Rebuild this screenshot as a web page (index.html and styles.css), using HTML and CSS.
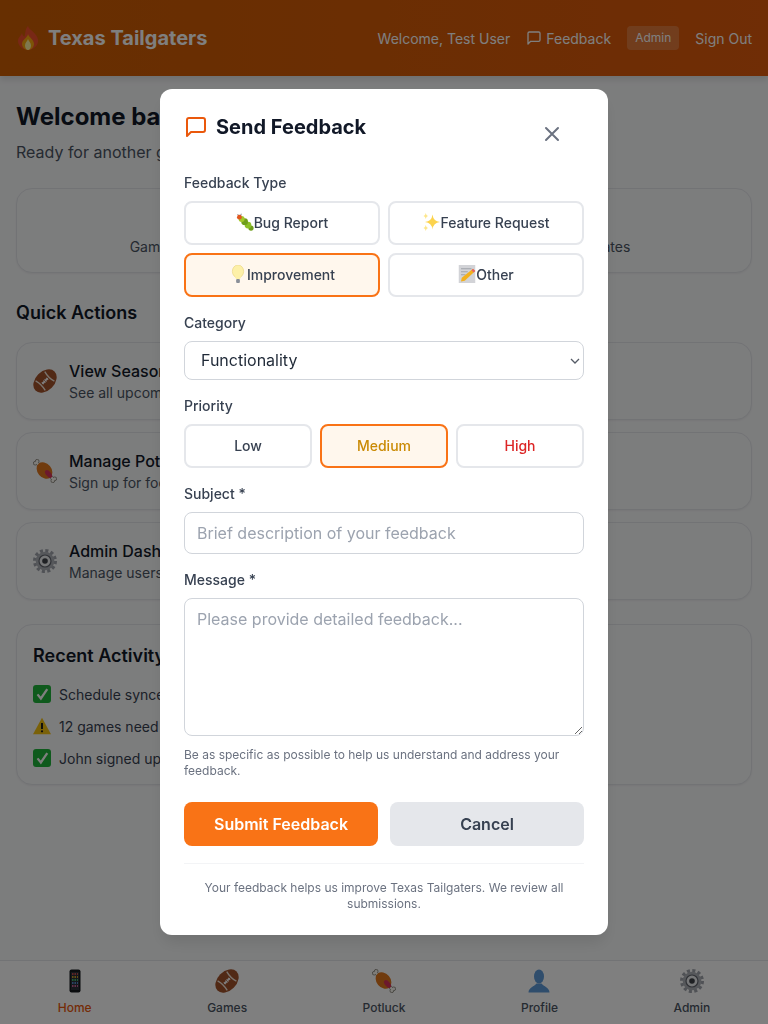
FILE: index.html
```html
<!DOCTYPE html>
<html lang="en">

<head>
    <meta charset="UTF-8">
    <title>Texas Tailgaters</title>
    <link rel="stylesheet" href="styles.css">
</head>

<body>
    <!-- emoji drawings, reused with <use> -->
    <svg class="sprite">
        <symbol id="flame" viewBox="0 0 24 24">
            <path fill="#f0502c" d="M12 0c1 4 9 7 10 13.500 1 6-5 10.500-10 10.500S1.500 20 2 14c.5-3 3-4 4-7 .5 2 1.500 3.500 2.500 3.500 1-3 .5-7.500 3.500-10.500z"/>
            <path fill="#f9a80f" d="M12 8c.5 3 6 5.500 6 10 0 3-3 6-6 6s-6-3-6-6c0-4.500 5.500-6 6-10z"/>
            <path fill="#fff0a0" d="M12 13c.5 2 3 3.500 3 6.500 0 2.500-1.500 4.500-3 4.500s-3-2-3-4.500c0-3 2.500-4.500 3-6.500z"/>
        </symbol>
        <symbol id="football" viewBox="0 0 24 24">
            <g transform="rotate(-45 12 12)">
                <ellipse cx="12" cy="12" rx="13.500" ry="9.500" fill="#a3522a"/>
                <path d="M5.500 5.200Q7.500 12 5.500 18.800M18.500 5.200Q16.500 12 18.500 18.800" fill="none" stroke="#f3e6da" stroke-width="1.400"/>
                <path d="M8 12h8M9 10.500v3M11 10.500v3M13 10.500v3M15 10.500v3" fill="none" stroke="#fff" stroke-width="1.100"/>
            </g>
        </symbol>
        <symbol id="meat" viewBox="0 0 24 24">
            <g fill="#8f8b82" stroke="#8f8b82">
                <path d="M3 3l18 18" stroke-width="3.800"/>
                <circle cx="2.200" cy="4.200" r="1.800"/>
                <circle cx="4.200" cy="2.200" r="1.800"/>
                <circle cx="21.800" cy="19.800" r="1.800"/>
                <circle cx="19.800" cy="21.800" r="1.800"/>
            </g>
            <g fill="#fffdf6" stroke="#fffdf6">
                <path d="M3 3l18 18" stroke-width="2.400"/>
                <circle cx="2.200" cy="4.200" r="1"/>
                <circle cx="4.200" cy="2.200" r="1"/>
                <circle cx="21.800" cy="19.800" r="1"/>
                <circle cx="19.800" cy="21.800" r="1"/>
            </g>
            <ellipse cx="11.500" cy="11.500" rx="7" ry="9" transform="rotate(-40 11.500 11.500)" fill="#e0761c"/>
            <ellipse cx="15.500" cy="15" rx="2.500" ry="4.500" transform="rotate(-40 15.500 15)" fill="#d8325a"/>
        </symbol>
        <symbol id="gear" viewBox="0 0 24 24">
            <circle cx="12" cy="12" r="10.200" fill="none" stroke="#a0a4ac" stroke-width="3.600" stroke-dasharray="3 2.340"/>
            <circle cx="12" cy="12" r="9.300" fill="#adb0b7"/>
            <circle cx="12" cy="12" r="6" fill="#eceef0" stroke="#63676f" stroke-width="1.200"/>
            <circle cx="12" cy="12" r="2.800" fill="#3f4248"/>
        </symbol>
        <symbol id="phone" viewBox="0 0 24 24">
            <rect x="6.500" y="0.500" width="11" height="23" rx="2" fill="#15181c"/>
            <rect x="8" y="3" width="8" height="18" fill="#2d3138"/>
            <path d="M9 5h1.500M11.500 5H13M14 5h1" stroke="#ef5350" stroke-width="1.300"/>
            <path d="M9 8h1.500M11.500 8H13M14 8h1" stroke="#fbbf24" stroke-width="1.300"/>
            <path d="M9 11h1.500M11.500 11H13M14 11h1" stroke="#4ade80" stroke-width="1.300"/>
            <path d="M9 14h1.500M11.500 14H13M14 14h1" stroke="#60a5fa" stroke-width="1.300"/>
            <path d="M9 17h1.500M11.500 17H13M14 17h1" stroke="#f472b6" stroke-width="1.300"/>
        </symbol>
        <symbol id="person" viewBox="0 0 24 24">
            <ellipse cx="12" cy="7.500" rx="5" ry="7" fill="#5f9ad8"/>
            <path fill="#5f9ad8" d="M1.500 23.500c0-5 6-6 8-9h5c2 3 8 4 8 9z"/>
        </symbol>
        <symbol id="bug" viewBox="0 0 24 24">
            <path d="M2 2l3 2M7 1l-1 3" stroke="#555" stroke-width="1"/>
            <circle cx="20" cy="20" r="3.500" fill="#6f9e1c"/>
            <circle cx="16" cy="16" r="4.500" fill="#8cbf26"/>
            <circle cx="11.500" cy="11.500" r="4.500" fill="#6f9e1c"/>
            <circle cx="7.500" cy="8" r="4" fill="#a3c72a"/>
            <circle cx="4.500" cy="5.500" r="3.200" fill="#e2571e"/>
        </symbol>
        <symbol id="sparkles" viewBox="0 0 24 24">
            <path fill="#fcd34d" d="M14 2q1 9 10 10-9 1-10 10-1-9-10-10 9-1 10-10z"/>
            <path fill="#fde68a" d="M5 0q.5 3.500 3 4-2.500.5-3 4-.5-3.500-3-4 2.500-.5 3-4zM5 16q.5 3.500 3 4-2.500.5-3 4-.5-3.500-3-4 2.500-.5 3-4z"/>
        </symbol>
        <symbol id="bulb" viewBox="0 0 24 24">
            <ellipse cx="12" cy="8.500" rx="7.500" ry="8.500" fill="#fdf0a8" stroke="#ecd98a" stroke-width="1"/>
            <path fill="#fdf0a8" d="M8 15h8l-1.500 4h-5z"/>
            <rect x="9.500" y="18.500" width="5" height="5.500" rx="1.500" fill="#8a8f98"/>
        </symbol>
        <symbol id="note" viewBox="0 0 24 24">
            <rect x="1" y="0" width="22" height="24" fill="#d2d3d7"/>
            <path d="M4 5h14M4 9h9M4 13h6" stroke="#9a9da4" stroke-width="1.200"/>
            <path d="M20 5l3 3L9 21l-5 1 1-5z" fill="#f2b01e"/>
            <path d="M20 5l3 3-2 2-3-3z" fill="#e4606d"/>
        </symbol>
        <symbol id="check" viewBox="0 0 24 24">
            <rect x="0" y="0" width="24" height="24" rx="4" fill="#1fb53a"/>
            <path d="M6 12.500l4.500 5.500L19 5.500" fill="none" stroke="#fff" stroke-width="3"/>
        </symbol>
        <symbol id="warning" viewBox="0 0 24 24">
            <path d="M12 1L24 23H0z" fill="#f5c211"/>
            <path d="M12 8v8" stroke="#1c1c1c" stroke-width="2.600"/>
            <circle cx="12" cy="19" r="1.500" fill="#1c1c1c"/>
        </symbol>
    </svg>

    <header class="topbar">
        <div class="brand"><svg class="emoji-24"><use href="#flame"/></svg><span>Texas Tailgaters</span></div>
        <nav class="topnav">
            <span>Welcome, Test User</span>
            <a class="topnav-feedback">
                <svg class="icon-16" viewBox="0 0 24 24" fill="none" stroke="currentColor" stroke-width="2" stroke-linecap="round" stroke-linejoin="round"><path d="M21 15a2 2 0 0 1-2 2H7l-4 4V5a2 2 0 0 1 2-2h14a2 2 0 0 1 2 2z"/></svg>
                Feedback
            </a>
            <a class="admin-pill">Admin</a>
            <a>Sign Out</a>
        </nav>
    </header>

    <main class="page">
        <h1>Welcome back, Test User!</h1>
        <p class="lead">Ready for another great game day?</p>

        <section class="card stats">
            <div class="stat"><b>12</b><span>Games Remaining</span></div>
            <div class="stat"><b>3</b><span>Potluck Items</span></div>
            <div class="stat"><b>5</b><span>Pending Updates</span></div>
        </section>

        <h2>Quick Actions</h2>
        <div class="actions">
            <div class="card action"><svg class="emoji-24"><use href="#football"/></svg><div><h3>View Season Schedule</h3><p>See all upcoming games</p></div></div>
            <div class="card action"><svg class="emoji-24"><use href="#meat"/></svg><div><h3>Manage Potluck</h3><p>Sign up for food and drinks</p></div></div>
            <div class="card action"><svg class="emoji-24"><use href="#gear"/></svg><div><h3>Admin Dashboard</h3><p>Manage users and games</p></div></div>
        </div>

        <section class="card activity">
            <h2>Recent Activity</h2>
            <div class="activity-row"><svg class="emoji-18"><use href="#check"/></svg>Schedule synced with ESPN</div>
            <div class="activity-row"><svg class="emoji-18"><use href="#warning"/></svg>12 games need theme assignment</div>
            <div class="activity-row"><svg class="emoji-18"><use href="#check"/></svg>John signed up for brisket</div>
        </section>
    </main>

    <nav class="tabbar">
        <a class="tab tab-active"><svg class="emoji-24"><use href="#phone"/></svg>Home</a>
        <a class="tab"><svg class="emoji-24"><use href="#football"/></svg>Games</a>
        <a class="tab"><svg class="emoji-24"><use href="#meat"/></svg>Potluck</a>
        <a class="tab"><svg class="emoji-24"><use href="#person"/></svg>Profile</a>
        <a class="tab"><svg class="emoji-24"><use href="#gear"/></svg>Admin</a>
    </nav>

    <div class="overlay">
        <form class="modal">
            <div class="modal-head">
                <h2 class="modal-title">
                    <svg class="icon-24" viewBox="0 0 24 24" fill="none" stroke="#ea580c" stroke-width="2" stroke-linecap="round" stroke-linejoin="round"><path d="M21 15a2 2 0 0 1-2 2H7l-4 4V5a2 2 0 0 1 2-2h14a2 2 0 0 1 2 2z"/></svg>
                    Send Feedback
                </h2>
                <button type="button" class="close">
                    <svg class="icon-24" viewBox="0 0 24 24" fill="none" stroke="currentColor" stroke-width="2" stroke-linecap="round" stroke-linejoin="round"><path d="M6 18 18 6M6 6l12 12"/></svg>
                </button>
            </div>

            <label class="field-label">Feedback Type</label>
            <div class="type-grid">
                <button type="button" class="choice"><svg class="emoji-18"><use href="#bug"/></svg>Bug Report</button>
                <button type="button" class="choice"><svg class="emoji-18"><use href="#sparkles"/></svg>Feature Request</button>
                <button type="button" class="choice selected"><svg class="emoji-18"><use href="#bulb"/></svg>Improvement</button>
                <button type="button" class="choice"><svg class="emoji-18"><use href="#note"/></svg>Other</button>
            </div>

            <label class="field-label">Category</label>
            <select class="select">
                <option>Functionality</option>
            </select>

            <label class="field-label">Priority</label>
            <div class="priority-grid">
                <button type="button" class="choice">Low</button>
                <button type="button" class="choice selected medium">Medium</button>
                <button type="button" class="choice high">High</button>
            </div>

            <label class="field-label">Subject *</label>
            <input class="text-input" type="text" placeholder="Brief description of your feedback">

            <label class="field-label">Message *</label>
            <textarea class="text-input message" placeholder="Please provide detailed feedback..."></textarea>
            <p class="hint">Be as specific as possible to help us understand and address your feedback.</p>

            <div class="modal-buttons">
                <button type="button" class="btn btn-primary">Submit Feedback</button>
                <button type="button" class="btn btn-muted">Cancel</button>
            </div>

            <p class="modal-foot">Your feedback helps us improve Texas Tailgaters. We review all submissions.</p>
        </form>
    </div>
</body>

</html>
```

FILE: styles.css
```css
* {
    box-sizing: border-box;
    margin: 0;
    padding: 0;
}

body {
    font-family: Inter, "Noto Sans", sans-serif;
    background-color: #f9fafb;
    color: #111827;
    height: 1024px;
    overflow: hidden;
    display: flex;
    flex-direction: column;
}

.sprite {
    display: none;
}

.emoji-24 {
    width: 24px;
    height: 24px;
    flex-shrink: 0;
}

.emoji-18 {
    width: 18px;
    height: 18px;
    flex-shrink: 0;
}

.topbar {
    flex-shrink: 0;
    height: 76px;
    padding: 0 16px;
    display: flex;
    justify-content: space-between;
    align-items: center;
    background: linear-gradient(to right, #ce5e02, #e05a0c);
    color: #fff;
    box-shadow: 0 4px 6px rgba(0, 0, 0, 0.1);
}

.brand {
    display: flex;
    align-items: center;
    gap: 8px;
    font-size: 20px;
    font-weight: 700;
}

.topnav {
    display: flex;
    align-items: center;
    gap: 16px;
    font-size: 14px;
}

.topnav-feedback {
    display: flex;
    align-items: center;
    gap: 4px;
}

.icon-16 {
    width: 16px;
    height: 16px;
}

.icon-24 {
    width: 24px;
    height: 24px;
    display: block;
}

.admin-pill {
    font-size: 12px;
    line-height: 16px;
    padding: 4px 8px;
    border-radius: 4px;
    background-color: rgba(255, 255, 255, 0.2);
}

.page {
    flex: 1;
    padding: 25px 16px 0;
}

.page h1 {
    font-size: 24px;
    line-height: 32px;
    font-weight: 700;
}

.lead {
    margin-top: 7px;
    font-size: 16px;
    line-height: 24px;
    color: #4b5563;
}

.card {
    background-color: #f9fafb;
    border: 1px solid #e5e7eb;
    border-radius: 16px;
    box-shadow: 0 1px 2px rgba(0, 0, 0, 0.05);
}

.stats {
    margin-top: 24px;
    height: 85px;
    padding: 0 76px 2px 68px;
    display: flex;
    justify-content: space-around;
    align-items: center;
    text-align: center;
}

.stat b {
    display: block;
    font-size: 24px;
    line-height: 32px;
}

.stat span {
    font-size: 14px;
    color: #4b5563;
}

.page h2 {
    font-size: 18px;
    line-height: 28px;
    font-weight: 600;
}

.page > h2 {
    margin: 26px 0 15px;
}

.actions {
    display: flex;
    flex-direction: column;
    gap: 12px;
}

.action {
    height: 78px;
    padding: 0 16px;
    display: flex;
    align-items: center;
    gap: 12px;
}

.action h3 {
    font-size: 16px;
    line-height: 24px;
    font-weight: 500;
}

.action p {
    font-size: 14px;
    line-height: 20px;
    color: #4b5563;
}

.activity {
    margin-top: 24px;
    padding: 17px 16px 0;
    height: 161px;
}

.activity-row {
    display: flex;
    align-items: center;
    gap: 8px;
    height: 32px;
    font-size: 14px;
    color: #374151;
}

.activity h2 {
    margin-bottom: 8px;
}

.tabbar {
    flex-shrink: 0;
    height: 64px;
    padding-top: 8px;
    background-color: #fff;
    border-top: 1px solid #e5e7eb;
    display: flex;
    justify-content: space-around;
    align-items: flex-start;
}

.tab {
    display: flex;
    flex-direction: column;
    align-items: center;
    gap: 7px;
    font-size: 12px;
    line-height: 16px;
    font-weight: 500;
    color: #4b5563;
}

.tab-active {
    color: #ea580c;
}

.overlay {
    position: fixed;
    top: 0;
    left: 0;
    width: 100%;
    height: 100%;
    background-color: rgba(0, 0, 0, 0.5);
    backdrop-filter: blur(0.5px);
    display: flex;
    justify-content: center;
    align-items: center;
}

.modal {
    width: 448px;
    padding: 24px 24px 23px;
    background-color: #fff;
    border-radius: 12px;
    box-shadow: 0 10px 15px -3px rgba(0, 0, 0, 0.1);
}

.modal-head {
    display: flex;
    justify-content: space-between;
    align-items: flex-start;
    height: 44px;
    margin-bottom: 16px;
}

.modal-title {
    display: flex;
    align-items: center;
    gap: 8px;
    font-size: 20px;
    line-height: 28px;
    font-weight: 700;
    color: #111827;
}

.close {
    margin: 9px 20px 0 0;
    height: 24px;
    border: none;
    background: none;
    color: #6b7280;
}

.field-label {
    display: block;
    margin-bottom: 8px;
    font-size: 14px;
    line-height: 20px;
    font-weight: 500;
    color: #374151;
}

.type-grid {
    display: grid;
    grid-template-columns: 1fr 1fr;
    gap: 8px;
    margin-bottom: 16px;
}

.priority-grid {
    display: grid;
    grid-template-columns: 1fr 1fr 1fr;
    gap: 8px;
    margin-bottom: 16px;
}

.choice {
    height: 44px;
    padding-bottom: 2px;
    border: 2px solid #e5e7eb;
    border-radius: 8px;
    background-color: #fff;
    font-family: inherit;
    font-size: 14px;
    font-weight: 500;
    color: #374151;
    display: flex;
    justify-content: center;
    align-items: center;
}

.selected {
    border-color: #f97316;
    background-color: #fff7ed;
}

.medium {
    color: #ca8a04;
}

.high {
    color: #dc2626;
}

.select {
    display: block;
    width: 100%;
    height: 39px;
    margin-bottom: 16px;
    padding: 0 24px 2px 16px;
    border: 1px solid #d1d5db;
    border-radius: 8px;
    appearance: none;
    background: #fff url("data:image/svg+xml,%3Csvg xmlns='http://www.w3.org/2000/svg' width='10' height='6'%3E%3Cpath d='M1 1l4 4 4-4' fill='none' stroke='%23555b66' stroke-width='1.300'/%3E%3C/svg%3E") no-repeat right 3px center;
    font-family: inherit;
    font-size: 16px;
    color: #1f2937;
}

.text-input {
    display: block;
    width: 100%;
    height: 42px;
    margin-bottom: 16px;
    padding: 8px 12px;
    border: 1px solid #d1d5db;
    border-radius: 8px;
    font-family: inherit;
    font-size: 16px;
}

.text-input::placeholder {
    color: #9ca3af;
}

.message {
    height: 138px;
    margin-bottom: 11px;
    padding-top: 10px;
}

.hint {
    font-size: 12px;
    line-height: 16px;
    color: #6b7280;
}

.modal-buttons {
    display: flex;
    gap: 12px;
    margin-top: 23px;
}

.btn {
    flex: 1;
    height: 44px;
    border: none;
    border-radius: 8px;
    font-family: inherit;
    font-size: 16px;
    font-weight: 600;
}

.btn-primary {
    background-color: #f97316;
    color: #fff;
}

.btn-muted {
    background-color: #e5e7eb;
    color: #374151;
}

.modal-foot {
    margin-top: 17px;
    padding-top: 16px;
    border-top: 1px solid #f3f4f6;
    font-size: 12px;
    line-height: 16px;
    color: #6b7280;
    text-align: center;
}
```
